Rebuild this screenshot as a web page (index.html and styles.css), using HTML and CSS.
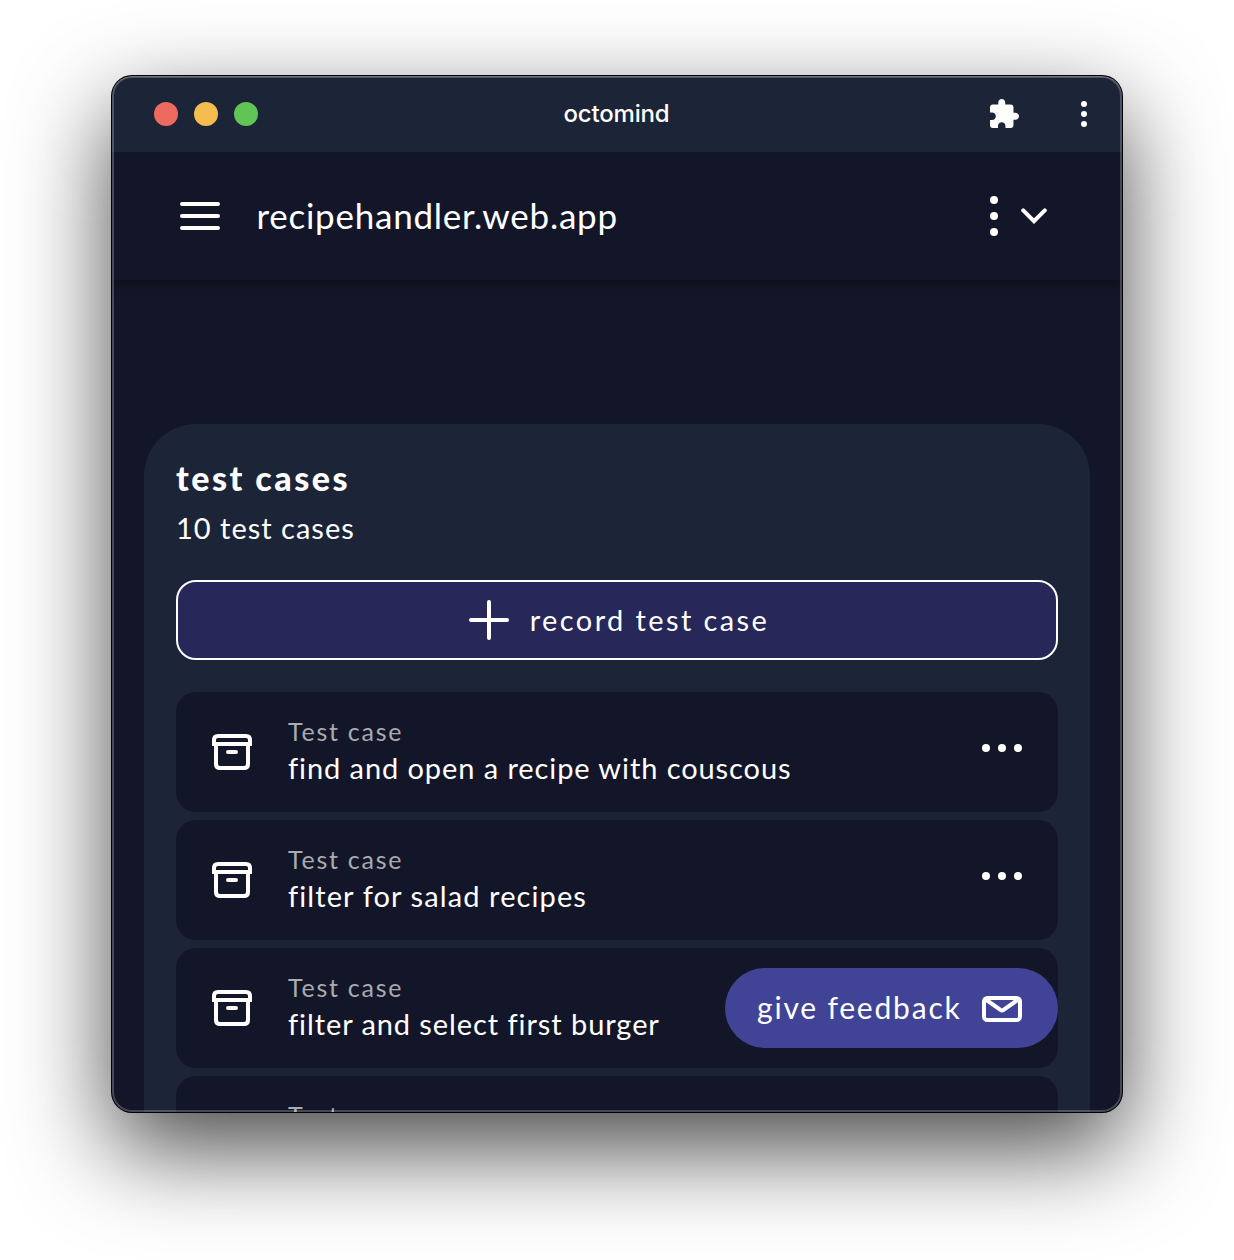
FILE: index.html
```html
<!DOCTYPE html>
<html lang="en">
<head>
<meta charset="utf-8">
<title>octomind</title>
<link rel="stylesheet" href="styles.css">
</head>
<body>
<svg width="0" height="0" class="defs">
  <symbol id="archive" viewBox="0 0 40 36">
    <g fill="none" stroke="#fff" stroke-width="4">
      <path d="M2 12V6Q2 2 6 2H34Q38 2 38 6V12"/>
      <path d="M0 10H40"/>
      <path d="M4 10V30Q4 34 8 34H32Q36 34 36 30V10"/>
      <path d="M16 18H24" stroke-linecap="round"/>
    </g>
  </symbol>
  <symbol id="dots" viewBox="0 0 40 8">
    <g fill="#fff"><circle cx="4" cy="4" r="4"/><circle cx="20" cy="4" r="4"/><circle cx="36" cy="4" r="4"/></g>
  </symbol>
</svg>
<div class="window">
  <header class="titlebar">
    <div class="lights"><i class="red"></i><i class="yellow"></i><i class="green"></i></div>
    <div class="title">octomind</div>
    <div class="tools">
      <svg class="puzzle" width="29" height="29" viewBox="2 1 21 21"><path fill="#fff" d="M20.5 11H19V7c0-1.1-.9-2-2-2h-4V3.500C13 2.120 11.880 1 10.500 1S8 2.120 8 3.500V5H4c-1.100 0-1.990.9-1.990 2v3.800H3.500c1.490 0 2.700 1.210 2.700 2.700s-1.210 2.700-2.700 2.700H2V20c0 1.100.9 2 2 2h3.800v-1.500c0-1.490 1.210-2.700 2.700-2.700 1.490 0 2.700 1.210 2.700 2.700V22H17c1.100 0 2-.9 2-2v-4h1.500c1.380 0 2.500-1.120 2.500-2.500S21.880 11 20.500 11z"/></svg>
      <svg width="6" height="26" viewBox="0 0 6 26" fill="#fff"><circle cx="3" cy="3" r="3"/><circle cx="3" cy="13" r="3"/><circle cx="3" cy="23" r="3"/></svg>
    </div>
  </header>
  <nav class="appbar">
    <svg width="40" height="28" viewBox="0 0 40 28"><path d="M2 2H38M2 14H38M2 26H38" stroke="#fff" stroke-width="4" stroke-linecap="round"/></svg>
    <div class="host">recipehandler.web.app</div>
    <svg width="8" height="40" viewBox="0 0 8 40" fill="#fff"><circle cx="4" cy="4" r="4"/><circle cx="4" cy="20" r="4"/><circle cx="4" cy="36" r="4"/></svg>
    <svg class="chevron" width="26" height="16" viewBox="0 0 26 16"><path d="M2.200 2.400L13 13.200L23.800 2.400" fill="none" stroke="#fff" stroke-width="4" stroke-linecap="round"/></svg>
  </nav>
  <main class="panel">
    <h1>test cases</h1>
    <p class="count">10 test cases</p>
    <button class="record">
      <svg width="40" height="40" viewBox="0 0 40 40"><path d="M20 2V38M2 20H38" stroke="#fff" stroke-width="4" stroke-linecap="round"/></svg>
      <span>record test case</span>
    </button>
    <ul class="cases">
      <li><svg class="box"><use href="#archive"/></svg><div class="text"><span class="kind">Test case</span><span class="name">find and open a recipe with couscous</span></div><svg class="more"><use href="#dots"/></svg></li>
      <li><svg class="box"><use href="#archive"/></svg><div class="text"><span class="kind">Test case</span><span class="name wide">filter for salad recipes</span></div><svg class="more"><use href="#dots"/></svg></li>
      <li><svg class="box"><use href="#archive"/></svg><div class="text"><span class="kind">Test case</span><span class="name">filter and select first burger</span></div></li>
      <li><div class="text last"><span class="kind">Test case</span></div></li>
    </ul>
  </main>
  <button class="feedback">
    <span>give feedback</span>
    <svg width="40" height="26" viewBox="0 0 40 26"><g fill="none" stroke="#fff" stroke-width="4"><rect x="2" y="2" width="36" height="22" rx="3.500"/><path d="M3 3L18.500 13.900Q20 15 21.500 13.900L37 3"/></g></svg>
  </button>
</div>
</body>
</html>
```
FILE: styles.css
```css
* { box-sizing: border-box; }
body {
  margin: 0;
  padding: 76px 112px 148px;
  height: 1260px;
  overflow: hidden;
  background: #fff;
  color: #fff;
  font-family: Lato, "Noto Sans", sans-serif;
}
.defs { position: absolute; }
svg { display: block; flex: none; }
h1, p, ul { margin: 0; padding: 0; }
button { color: inherit; font: inherit; }

.window {
  position: relative;
  width: 1010px;
  height: 1036px;
  border-radius: 20px;
  background: #131628;
  box-shadow: 0 0 0 1px #000, 0 36px 96px rgba(0, 0, 0, .73);
  overflow: hidden;
}
.window::after {
  content: "";
  position: absolute;
  z-index: 2;
  inset: 0;
  border-radius: inherit;
  box-shadow: inset 0 0 0 2px rgba(255, 255, 255, .22), inset 0 1px 0 rgba(255, 255, 255, .2);
  pointer-events: none;
}

.titlebar {
  position: relative;
  z-index: 1;
  display: grid;
  grid-template-columns: 1fr auto 1fr;
  align-items: center;
  height: 76px;
  padding: 0 35px 0 42px;
  background: #1c2438;
}
.lights { display: flex; gap: 16px; }
.lights i { width: 24px; height: 24px; border-radius: 50%; }
.red { background: #ed6a5e; }
.yellow { background: #f5bd4f; }
.green { background: #61c454; }
.title {
  padding-right: 8px;
  font: 500 24px/28px Inter, sans-serif;
  letter-spacing: -.2px;
}
.tools { display: flex; justify-content: flex-end; align-items: center; gap: 62px; }
.puzzle { margin-bottom: 1px; }

.appbar {
  display: flex;
  align-items: center;
  height: 128px;
  padding: 0 75px 0 68px;
  box-shadow: 0 2px 10px rgba(0, 0, 0, .5);
}
.host {
  flex: 1;
  margin: 0 0 2px 36.500px;
  font-size: 35px;
  line-height: 44px;
  letter-spacing: .75px;
}
.chevron { margin-left: 23px; }

.panel {
  margin: 144px 32px 0;
  padding: 31px 32px 0;
  height: 900px;
  border-radius: 52px 52px 0 0;
  background: #1c2438;
}
h1 { font-size: 34px; line-height: 46px; font-weight: 900; letter-spacing: 2.500px; }
.count { margin-top: 6px; font-size: 29px; line-height: 42px; letter-spacing: 1px; }
.record {
  display: flex;
  align-items: center;
  justify-content: center;
  gap: 21px;
  width: 100%;
  height: 80px;
  margin-top: 31px;
  padding: 0 0 0 2px;
  border: 2px solid #fff;
  border-radius: 20px;
  background: #272759;
  font-size: 29px;
  letter-spacing: 2.400px;
}
.record span { margin: 0 -2px 2px 0; }
.cases { display: flex; flex-direction: column; gap: 8px; margin-top: 32px; list-style: none; }
.cases li {
  display: flex;
  height: 120px;
  padding: 0 36px;
  border-radius: 20px;
  background: #131628;
}
.box { width: 40px; height: 36px; margin-top: 42px; }
.text { flex: 1; display: flex; flex-direction: column; margin: 22px 0 0 36px; }
.text.last { margin-left: 76px; }
.kind { font-size: 25px; line-height: 34px; letter-spacing: 1.750px; color: #a9aab2; }
.name { margin-top: 1px; font-size: 29px; line-height: 38px; letter-spacing: .920px; white-space: nowrap; }
.name.wide { letter-spacing: 1.100px; }
.more { width: 40px; height: 8px; margin-top: 52px; }

.feedback {
  position: absolute;
  right: 64px;
  bottom: 64px;
  display: flex;
  align-items: center;
  justify-content: space-between;
  width: 333px;
  height: 80px;
  padding: 0 36px 0 32px;
  border: 0;
  border-radius: 40px;
  background: #414496;
  font-size: 30px;
  letter-spacing: 1.800px;
}
.feedback span { margin-bottom: 2px; white-space: nowrap; }
.feedback svg { margin-top: 2px; }
```
